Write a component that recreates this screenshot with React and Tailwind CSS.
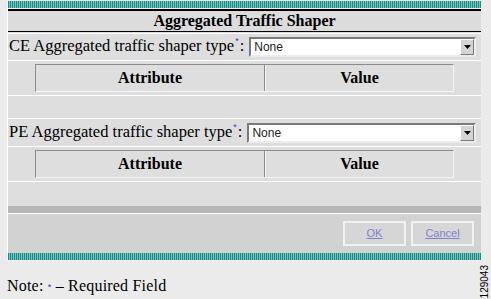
export default function App() {
  const teal =
    "h-[7px] bg-[repeating-linear-gradient(90deg,#1f8b87_0px,#1f8b87_1px,#74c3bf_1px,#74c3bf_2px)]";

  const Select = () => (
    <div className="flex-1 h-[20px] mr-[5px] bg-white border-2 border-t-[#7a7a7a] border-l-[#7a7a7a] border-b-[#ececec] border-r-[#ececec] flex items-stretch">
      <span className="flex-1 pl-[3px] text-[12px] leading-[16px] font-['Liberation_Sans',sans-serif] text-[#222]">
        None
      </span>
      <div className="w-[14px] bg-[#d4d4d4] border border-t-white border-l-white border-b-[#7a7a7a] border-r-[#7a7a7a] flex items-center justify-center">
        <svg width="7" height="4" viewBox="0 0 7 4">
          <path d="M0 0 H7 L3.5 4 Z" fill="#000" />
        </svg>
      </div>
    </div>
  );

  const Label = ({ prefix }) => (
    <span className="text-[16.5px] leading-[18px] whitespace-nowrap pl-[1px]">
      {prefix} Aggregated traffic shaper type
      <span className="relative -top-[7px] text-[9px] text-[#3434d4] font-['Liberation_Sans',sans-serif] px-[1px]">
        *
      </span>
      :
    </span>
  );

  const Table = () => (
    <div className="w-[419px] h-[28px] flex border border-t-[#8c8c8c] border-l-[#8c8c8c] border-b-[#f4f4f4] border-r-[#f4f4f4]">
      <div className="w-[229px] h-full flex items-center justify-center font-bold text-[16px] border-r border-[#8c8c8c]">
        Attribute
      </div>
      <div className="flex-1 h-full flex items-center justify-center font-bold text-[16px] border-l border-[#f4f4f4]">
        Value
      </div>
    </div>
  );

  const Btn = ({ children }) => (
    <div className="w-[63px] h-[25px] bg-[#d6d6d6] border-2 border-[#f2f2f2] flex items-center justify-center text-[11px] font-['Liberation_Sans',sans-serif] text-[#8282cc] underline">
      {children}
    </div>
  );

  return (
    <div className="w-[491px] h-[299px] bg-[#ebebeb] overflow-hidden font-['Liberation_Serif',serif] text-black">
      <div className="ml-[7px] w-[474px] mt-[1px] border-l border-white">
        <div className={teal} />
        <div className="h-[1px] bg-[#f2f2f2]" />
        <div className="h-[23px] border-t-2 border-b border-black bg-[#dcdcdc] flex items-center justify-center font-bold text-[16px]">
          Aggregated Traffic Shaper
        </div>
        <div className="h-[1px] bg-[#dcdcdc]" />
        <div className="h-[1px] bg-white" />
        <div className="h-[26px] bg-[#dedede] flex items-center gap-[5px]">
          <Label prefix="CE" />
          <Select />
        </div>
        <div className="h-[1px] bg-white" />
        <div className="h-[34px] bg-[#dedede] pt-[3px] pl-[27px]">
          <Table />
        </div>
        <div className="h-[1px] bg-white" />
        <div className="h-[22px] bg-[#dedede]" />
        <div className="h-[1px] bg-white" />
        <div className="h-[27px] bg-[#dedede] flex items-center gap-[5px]">
          <Label prefix="PE" />
          <Select />
        </div>
        <div className="h-[1px] bg-white" />
        <div className="h-[34px] bg-[#dedede] pt-[3px] pl-[27px]">
          <Table />
        </div>
        <div className="h-[1px] bg-white" />
        <div className="h-[24px] bg-[#dedede]" />
        <div className="h-[7px] bg-[#b6b6b6]" />
        <div className="h-[1px] bg-white" />
        <div className="h-[39px] bg-[#d2d2d2] flex justify-end items-start pt-[7px] pr-[7px] gap-[5px]">
          <Btn>OK</Btn>
          <Btn>Cancel</Btn>
        </div>
        <div className={teal} />
      </div>
      <div className="flex justify-between items-start h-[39px]">
        <div className="pl-[7px] pt-[17px] text-[16px] leading-[18px] whitespace-nowrap tracking-[0.2px]">
          Note:{" "}
          <span className="relative -top-[1px] text-[9px] text-[#3434d4] font-['Liberation_Sans',sans-serif]">
            *
          </span>{" "}
          – Required Field
        </div>
        <div className="pt-[5px] pr-[1px]">
          <div className="[writing-mode:vertical-rl] rotate-180 text-[10px] leading-[10px] font-['Liberation_Sans',sans-serif]">
            129043
          </div>
        </div>
      </div>
    </div>
  );
}
